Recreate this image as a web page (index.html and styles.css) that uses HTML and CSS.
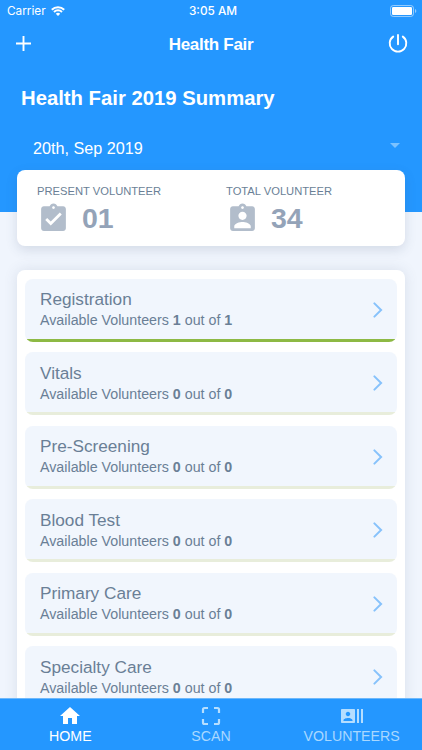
FILE: index.html
```
<!DOCTYPE html>
<html lang="en">
<head>
    <meta charset="UTF-8">
    <meta name="viewport" content="width=device-width, initial-scale=1.0">
    <title>Health Fair</title>
    <link rel="stylesheet" href="styles.css">
</head>
<body>
    <header class="header">
        <div class="status-bar">
            <div class="carrier">
                <span>Carrier</span>
                <svg class="wifi" viewBox="0 0 14 10" fill="none" stroke="#fff" stroke-width="2">
                    <path d="M0.8 3.7a8.8 8.8 0 0 1 12.4 0M3 6a5.7 5.7 0 0 1 8 0"/>
                    <path d="M7 10L4.8 7.8a3.1 3.1 0 0 1 4.4 0z" fill="#fff" stroke="none"/>
                </svg>
            </div>
            <div class="time">3:05 AM</div>
            <svg class="battery" viewBox="0 0 27 12">
                <rect x="0.5" y="0.5" width="23" height="11" rx="2.8" fill="none" stroke="#fff" stroke-opacity="0.5"/>
                <rect x="2" y="2" width="20" height="8" rx="1.2" fill="#fff"/>
                <path d="M25 4v4c1.8-.7 1.8-3.3 0-4z" fill="#fff" fill-opacity="0.5"/>
            </svg>
        </div>
        <nav class="nav-bar">
            <svg class="add-icon" viewBox="0 0 15 15" stroke="#fff" stroke-width="1.9">
                <path d="M7.5 0v15M0 7.5h15"/>
            </svg>
            <div class="nav-title">Health Fair</div>
            <svg class="power-icon" viewBox="0 0 20 20" fill="none" stroke="#fff" stroke-width="1.9" stroke-linecap="round">
                <path d="M10 1v9.2M5.200 2.600a8.300 8.300 0 1 0 9.600 0"/>
            </svg>
        </nav>
        <h1>Health Fair 2019 Summary</h1>
        <div class="date-select">
            <span>20th, Sep 2019</span>
            <svg class="caret" viewBox="0 0 10 5"><path d="M0 0h10L5 5z" fill="#7cc2ff"/></svg>
        </div>
    </header>

    <main>
        <section class="stats">
            <div class="stat">
                <div class="stat-label present">PRESENT VOLUNTEER</div>
                <div class="stat-value">
                    <svg class="stat-icon" viewBox="0 0 24 24">
                        <path d="M19 3h-4.18C14.4 1.84 13.3 1 12 1c-1.3 0-2.4.84-2.82 2H5c-1.1 0-2 .9-2 2v14c0 1.1.9 2 2 2h14c1.1 0 2-.9 2-2V5c0-1.1-.9-2-2-2zm-7 0c.55 0 1 .45 1 1s-.45 1-1 1-1-.45-1-1 .45-1 1-1zm-2 14l-4-4 1.41-1.41L10 14.17l6.59-6.59L18 9l-8 8z"/>
                    </svg>
                    <span>01</span>
                </div>
            </div>
            <div class="stat">
                <div class="stat-label">TOTAL VOLUNTEER</div>
                <div class="stat-value">
                    <svg class="stat-icon" viewBox="0 0 24 24">
                        <path d="M19 3h-4.18C14.4 1.84 13.3 1 12 1c-1.3 0-2.4.84-2.82 2H5c-1.1 0-2 .9-2 2v14c0 1.1.9 2 2 2h14c1.1 0 2-.9 2-2V5c0-1.1-.9-2-2-2zm-7 0c.55 0 1 .45 1 1s-.45 1-1 1-1-.45-1-1 .45-1 1-1zm0 4c1.66 0 3 1.34 3 3s-1.34 3-3 3-3-1.34-3-3 1.34-3 3-3zm6 12H6v-1.4c0-2 4-3.1 6-3.1s6 1.1 6 3.1V19z"/>
                    </svg>
                    <span>34</span>
                </div>
            </div>
        </section>

        <section class="stations">
            <div class="station full">
                <div>
                    <h2>Registration</h2>
                    <p>Available Volunteers <b>1</b> out of <b>1</b></p>
                </div>
                <svg class="chevron" viewBox="0 0 10 16"><path d="M1.4 1.4L8.1 8l-6.7 6.6"/></svg>
            </div>
            <div class="station">
                <div>
                    <h2>Vitals</h2>
                    <p>Available Volunteers <b>0</b> out of <b>0</b></p>
                </div>
                <svg class="chevron" viewBox="0 0 10 16"><path d="M1.4 1.4L8.1 8l-6.7 6.6"/></svg>
            </div>
            <div class="station">
                <div>
                    <h2>Pre-Screening</h2>
                    <p>Available Volunteers <b>0</b> out of <b>0</b></p>
                </div>
                <svg class="chevron" viewBox="0 0 10 16"><path d="M1.4 1.4L8.1 8l-6.7 6.6"/></svg>
            </div>
            <div class="station">
                <div>
                    <h2>Blood Test</h2>
                    <p>Available Volunteers <b>0</b> out of <b>0</b></p>
                </div>
                <svg class="chevron" viewBox="0 0 10 16"><path d="M1.4 1.4L8.1 8l-6.7 6.6"/></svg>
            </div>
            <div class="station">
                <div>
                    <h2>Primary Care</h2>
                    <p>Available Volunteers <b>0</b> out of <b>0</b></p>
                </div>
                <svg class="chevron" viewBox="0 0 10 16"><path d="M1.4 1.4L8.1 8l-6.7 6.6"/></svg>
            </div>
            <div class="station">
                <div>
                    <h2>Specialty Care</h2>
                    <p>Available Volunteers <b>0</b> out of <b>0</b></p>
                </div>
                <svg class="chevron" viewBox="0 0 10 16"><path d="M1.4 1.4L8.1 8l-6.7 6.6"/></svg>
            </div>
        </section>
    </main>

    <footer class="tab-bar">
        <div class="tab active">
            <svg viewBox="0 0 24 24"><path d="M10 20v-6h4v6h5v-8h3L12 3 2 12h3v8z"/></svg>
            <span>HOME</span>
        </div>
        <div class="tab">
            <svg class="scan-icon" viewBox="0 0 24 24"><path d="M4 9V5.500Q4 4 5.500 4H9M15 4h3.500Q20 4 20 5.500V9M4 15v3.500Q4 20 5.500 20H9M20 15v3.500Q20 20 18.500 20H15"/></svg>
            <span>SCAN</span>
        </div>
        <div class="tab">
            <svg viewBox="0 0 24 24"><path d="M21 5v14h2V5h-2zm-4 14h2V5h-2v14zM14 5H2c-.55 0-1 .45-1 1v12c0 .55.45 1 1 1h12c.55 0 1-.45 1-1V6c0-.55-.45-1-1-1zM8 7.75c1.24 0 2.25 1.01 2.25 2.25S9.24 12.25 8 12.25 5.75 11.24 5.75 10 6.76 7.75 8 7.75zM12.5 17h-9v-.75c0-1.5 3-2.25 4.5-2.25s4.5.75 4.5 2.25V17z"/></svg>
            <span>VOLUNTEERS</span>
        </div>
    </footer>
</body>
</html>
```
FILE: styles.css
```
* {
    box-sizing: border-box;
}
body {
    font-family: "Liberation Sans", Arial, sans-serif;
    background-color: #f0f5fd;
    color: #6a7f96;
    margin: 0;
    height: 100vh;
    overflow: hidden;
    display: flex;
    flex-direction: column;
}
svg {
    display: block;
}
.header {
    background-color: #2497ff;
    color: white;
    height: 212px;
    flex-shrink: 0;
}
.status-bar {
    display: grid;
    grid-template-columns: 1fr auto 1fr;
    align-items: center;
    height: 22px;
    padding: 0 5px 0 7px;
    font-family: Inter, sans-serif;
    font-size: 11.8px;
}
.carrier {
    display: flex;
    align-items: center;
    gap: 5px;
}
.wifi {
    width: 14px;
    height: 10px;
}
.time {
    font-weight: 500;
    padding-left: 2px;
}
.battery {
    width: 27px;
    height: 12px;
    justify-self: end;
}
.nav-bar {
    display: flex;
    align-items: center;
    justify-content: space-between;
    height: 43px;
    padding: 0 14px 0 16px;
}
.add-icon {
    width: 15px;
    height: 15px;
}
.nav-title {
    font-size: 17px;
    font-weight: bold;
    letter-spacing: -0.3px;
    padding: 2px 0 0 3px;
}
.power-icon {
    width: 20px;
    height: 20px;
}
h1 {
    margin: 21px 0 0 21px;
    font-size: 20.3px;
    line-height: 24px;
}
.date-select {
    display: flex;
    justify-content: space-between;
    align-items: center;
    margin-top: 28px;
    padding: 0 22px 0 33px;
    font-size: 16.2px;
    line-height: 20px;
}
.caret {
    width: 10px;
    height: 5px;
    margin-bottom: 5px;
}
main {
    flex: 1;
    min-height: 0;
    padding: 0 17px;
}
.stats {
    display: flex;
    height: 76px;
    margin-top: -42px;
    padding: 14px 0 0 20px;
    background-color: white;
    border-radius: 8px;
    position: relative;
    box-shadow: 0 4px 12px rgba(60, 80, 110, 0.16);
}
.stat {
    width: 189px;
    flex-shrink: 0;
}
.stat-label {
    font-size: 11.2px;
    line-height: 14px;
}
.stat-value {
    display: flex;
    align-items: center;
    gap: 12px;
    height: 32px;
    margin-top: 4px;
    color: #94a3b8;
    font-size: 28.5px;
    font-weight: bold;
}
.stat-icon {
    width: 33px;
    height: 33px;
    fill: #b2bdcb;
}
.stations {
    display: flex;
    flex-direction: column;
    gap: 10.6px;
    margin-top: 24px;
    padding: 8.5px 8px;
    background-color: white;
    border-radius: 8px;
    box-shadow: 0 0 14px rgba(60, 80, 110, 0.13);
}
.station {
    display: flex;
    align-items: center;
    justify-content: space-between;
    height: 63px;
    flex-shrink: 0;
    padding: 0 14px 1px 15px;
    background: linear-gradient(#e8eddb, #e8eddb) bottom / 100% 3px no-repeat #f1f6fd;
    border-radius: 8px;
}
.full {
    background-image: linear-gradient(#8db944, #8db944);
}
.station h2 {
    margin: 0;
    font-size: 17.2px;
    font-weight: normal;
    line-height: 22px;
}
.station p {
    margin: 0;
    font-size: 14.25px;
    line-height: 21px;
}
.chevron {
    width: 10px;
    height: 16px;
    fill: none;
    stroke: #87c2fb;
    stroke-width: 2;
    stroke-linecap: round;
}
.tab-bar {
    display: flex;
    height: 52px;
    flex-shrink: 0;
    background-color: #2497ff;
    border-top: 1px solid #6db8fb;
    position: relative;
}
.tab {
    flex: 1;
    display: flex;
    flex-direction: column;
    align-items: center;
    padding-top: 5px;
    color: #a9d8ff;
    font-size: 14.2px;
    line-height: 16px;
}
.tab svg {
    width: 24px;
    height: 24px;
    fill: #b5deff;
}
.tab .scan-icon {
    fill: none;
    stroke: #b5deff;
    stroke-width: 2.2;
}
.active {
    color: white;
}
.active svg {
    fill: white;
}
```
